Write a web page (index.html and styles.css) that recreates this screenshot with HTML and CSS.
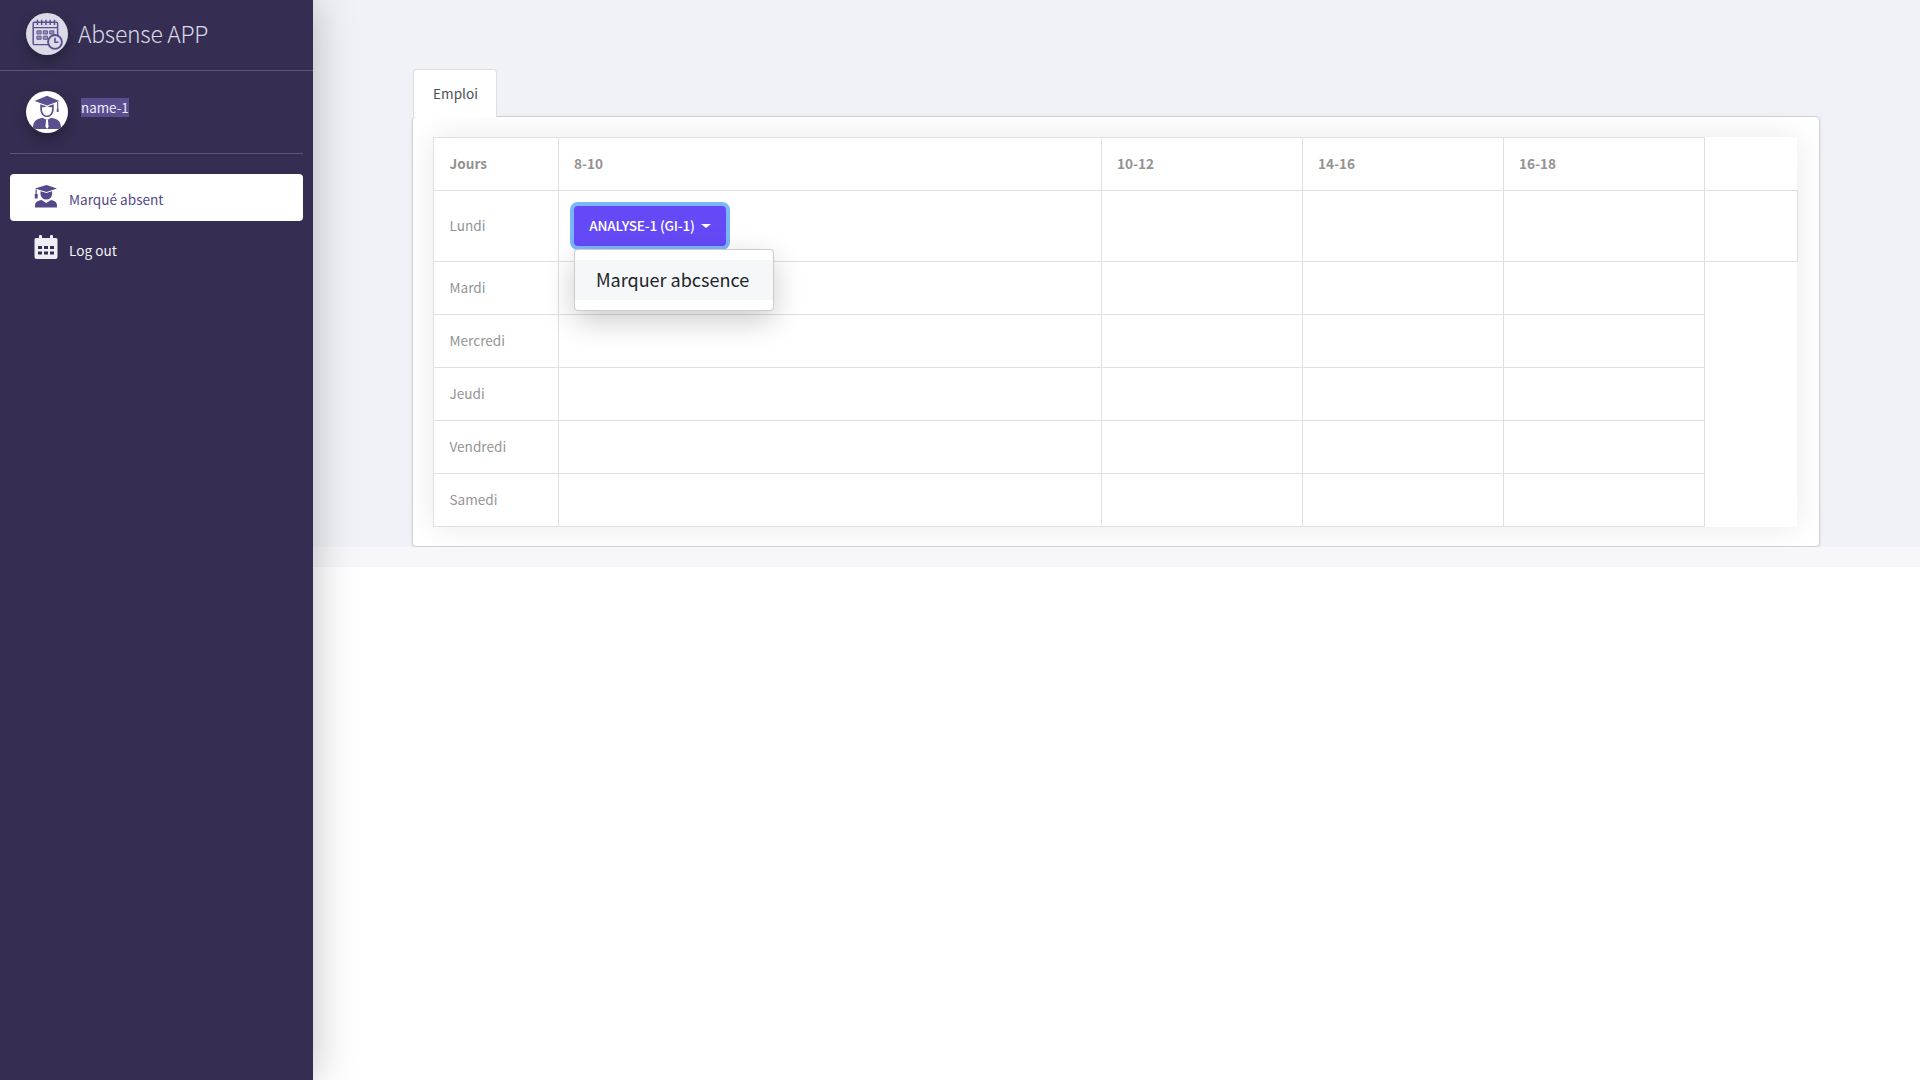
FILE: index.html
```html
<!DOCTYPE html>
<html lang="en">
<head>
    <meta charset="UTF-8">
    <meta name="viewport" content="width=device-width, initial-scale=1.0">
    <title>Absense APP</title>
    <link rel="stylesheet" href="styles.css">
</head>
<body>

<aside class="sidebar">
    <div class="brand">
        <span class="round-icon brand-icon">
            <svg viewBox="0 0 32 32" width="34" height="34" fill="none" stroke="#5b4f90" stroke-width="1.4">
                <rect x="3" y="5" width="23" height="21" rx="1"/>
                <path d="M3 10h23M7 2.5v5M11 2.5v5M15 2.5v5M19 2.5v5M23 2.5v5"/>
                <path d="M6.5 13h4v3h-4zM12.5 13h4v3h-4zM18.500 13h4v3h-4zM6.500 18h4v3h-4zM12.500 18h4v3h-4z" fill="#5b4f90" fill-opacity=".55" stroke-width=".8"/>
                <circle cx="23.500" cy="23.500" r="6.500" fill="#dcdae6" stroke-width="1.800"/>
                <path d="M23.500 19.500v4.300h3.300" stroke-width="1.500"/>
            </svg>
        </span>
        <span class="brand-name">Absense APP</span>
    </div>

    <div class="user">
        <span class="round-icon user-icon">
            <svg viewBox="0 0 32 32" width="36" height="36">
                <path d="M16 1.500 5 6.200 16 10.200 27 6.200z" fill="#5b4f90"/>
                <path d="M25.500 7v6" stroke="#5b4f90" stroke-width="1"/>
                <rect x="24.700" y="13" width="1.600" height="3" fill="#5b4f90"/>
                <path d="M10 9v4c0 4 2.500 7.500 6 7.500s6-3.500 6-7.500V9l-6 2.200z" fill="#5b4f90"/>
                <path d="M11.500 11.500c2 .5 3.500 0 4.500-.8 1 .8 2.500 1.300 4.500.8v1.500c0 3.500-2 6.200-4.500 6.200s-4.500-2.700-4.500-6.200z" fill="#fff"/>
                <path d="M3.500 31c0-6 1.500-8.500 8.500-10l4 2 4-2c7 1.500 8.500 4 8.500 10z" fill="#5b4f90"/>
                <path d="M15.200 23h1.600l.6 6-1.400 2-1.400-2z" fill="#fff"/>
            </svg>
        </span>
        <span class="user-name">name-1</span>
    </div>

    <nav class="menu">
        <a class="menu-item active" href="#">
            <svg viewBox="0 0 24 24" width="24" height="24" fill="#54488a">
                <path d="M12.500 1 1 4.500 12.500 8 23 4.500z"/>
                <path d="M1.500 5.500h1.200v4.500h1v4.500H.8V10h.7z"/>
                <path d="M6.500 7.200V10a5.800 5.500 0 0 0 11.600 0V7.200L12.500 9z"/>
                <path d="M7.500 16 12.300 19l4.700-3c4 .6 6 2.500 6 5.500v2H1v-2c0-3 2.500-4.900 6.500-5.500z"/>
            </svg>
            <span>Marqué absent</span>
        </a>
        <a class="menu-item" href="#">
            <svg viewBox="0 0 24 24" width="24" height="24" fill="#eeeef4">
                <rect x="5" y="0" width="3" height="5" rx="1"/>
                <rect x="16" y="0" width="3" height="5" rx="1"/>
                <path fill-rule="evenodd" d="M2 3h20a1.500 1.500 0 0 1 1.500 1.500V22a2 2 0 0 1-2 2H2.500a2 2 0 0 1-2-2V4.500A1.500 1.500 0 0 1 2 3zM4 11v3h4v-3zM10 11v3h4v-3zM16 11v3h4v-3zM4 16.500v3h4v-3zM10 16.500v3h4v-3zM16 16.500v3h4v-3z"/>
            </svg>
            <span>Log out</span>
        </a>
    </nav>
</aside>

<main class="main">
    <section class="panel">
        <div class="tab">Emploi</div>
        <div class="card">
            <div class="table-wrap">
                <table class="schedule">
                    <thead>
                        <tr>
                            <th class="col-day">Jours</th>
                            <th class="col-first">8-10</th>
                            <th class="col-slot">10-12</th>
                            <th class="col-slot">14-16</th>
                            <th class="col-slot">16-18</th>
                            <th class="col-extra blank"></th>
                        </tr>
                    </thead>
                    <tbody>
                        <tr class="row-tall">
                            <td>Lundi</td>
                            <td class="cell-course">
                                <div class="dropdown">
                                    <button class="btn-course" type="button">ANALYSE-1 (GI-1)<span class="caret"></span></button>
                                    <div class="dropdown-menu">
                                        <a class="dropdown-item" href="#">Marquer abcsence</a>
                                    </div>
                                </div>
                            </td>
                            <td></td><td></td><td></td><td class="col-extra"></td>
                        </tr>
                        <tr><td>Mardi</td><td></td><td></td><td></td><td></td></tr>
                        <tr><td>Mercredi</td><td></td><td></td><td></td><td></td></tr>
                        <tr><td>Jeudi</td><td></td><td></td><td></td><td></td></tr>
                        <tr><td>Vendredi</td><td></td><td></td><td></td><td></td></tr>
                        <tr><td>Samedi</td><td></td><td></td><td></td><td></td></tr>
                    </tbody>
                </table>
            </div>
        </div>
    </section>
    <div class="panel-foot"></div>
</main>

</body>
</html>
```

FILE: styles.css
```css
* {
    box-sizing: border-box;
}
body {
    font-family: "Noto Sans CJK SC", "Noto Sans", sans-serif;
    background-color: #fff;
    margin: 0;
    padding: 0;
    display: flex;
    min-height: 1080px;
    overflow: hidden;
}
a {
    text-decoration: none;
}

/* sidebar */
.sidebar {
    width: 313px;
    height: 1080px;
    flex-shrink: 0;
    background-color: #352e52;
    box-shadow: 0 0 40px rgba(0, 0, 0, 0.25);
    position: relative;
    z-index: 2;
}
.brand {
    height: 71px;
    padding: 13px 0 0 26px;
    display: flex;
    align-items: flex-start;
    gap: 10px;
    border-bottom: 1px solid rgba(255, 255, 255, 0.2);
}
.round-icon {
    width: 42px;
    height: 42px;
    border-radius: 50%;
    display: flex;
    align-items: center;
    justify-content: center;
    flex-shrink: 0;
    box-shadow: 0 6px 14px rgba(0, 0, 0, 0.3);
}
.brand-icon {
    background-color: #dcdae6;
}
.brand-name {
    font-size: 23px;
    font-weight: 300;
    line-height: 40px;
    color: #d9d9e6;
    letter-spacing: -0.3px;
}
.user {
    margin: 0 10px;
    height: 83px;
    padding: 20px 0 0 16px;
    display: flex;
    align-items: flex-start;
    gap: 13px;
    border-bottom: 1px solid rgba(255, 255, 255, 0.2);
}
.user-icon {
    background-color: #fff;
    overflow: hidden;
}
.user-name {
    margin-top: 7px;
    padding: 0;
    font-size: 13.4px;
    line-height: 19px;
    color: #eeeef4;
    background-color: #5a4e90;
}
.menu {
    padding: 20px 10px 0;
}
.menu-item {
    height: 47px;
    padding: 0 0 0 24px;
    margin-bottom: 4px;
    display: flex;
    align-items: center;
    gap: 11px;
    border-radius: 4px;
    font-size: 13.6px;
    color: #f2f2f6;
}
.menu-item span {
    margin-top: 3px;
}
.menu-item svg {
    margin-top: -3px;
}
.menu-item.active {
    background-color: #fff;
    color: #54488a;
}

/* main area */
.main {
    flex: 1;
}
.panel {
    background-color: #f1f2f7;
    padding: 69px 100px 0 99px;
    height: 547px;
}
.panel-foot {
    height: 20px;
    background-color: #f7f7fa;
}
.tab {
    width: 84px;
    height: 48px;
    margin-left: 1px;
    padding-left: 1px;
    background-color: #fff;
    border: 1px solid #dedee4;
    border-bottom: none;
    border-radius: 4px 4px 0 0;
    font-size: 13.6px;
    line-height: 46px;
    text-align: center;
    color: #495057;
    position: relative;
    z-index: 1;
    margin-bottom: -1px;
}
.card {
    background-color: #fff;
    border: 1px solid #d2d2da;
    border-radius: 4px;
    height: 431px;
    padding: 20px;
    box-shadow: 0 1px 3px rgba(0, 0, 0, 0.1);
}
.table-wrap {
    width: 1364px;
    background-color: #fff;
    box-shadow: 0 0 30px rgba(0, 0, 0, 0.09);
    height: 390px;
}
.schedule {
    border-collapse: collapse;
    table-layout: fixed;
    width: 1364px;
    font-size: 13.6px;
    color: #949494;
}
.schedule th, .schedule td {
    border: 1px solid #dfdfe4;
    padding: 0 15px 3px;
    height: 53px;
    text-align: left;
    vertical-align: middle;
}
.schedule th:first-child, .schedule td:first-child {
    padding-left: 15.5px;
}
.schedule th {
    font-weight: 700;
    color: #949292;
}
.schedule .blank {
    border-top-color: transparent;
    border-right-color: transparent;
}
.schedule .cell-course {
    padding-bottom: 1px;
}
.row-tall td {
    height: 71px;
}
.col-day { width: 125px; }
.col-first { width: 543px; }
.col-slot { width: 201px; }
.col-extra { width: 93px; }

/* dropdown */
.dropdown {
    position: relative;
    display: inline-block;
    vertical-align: middle;
}
.btn-course {
    display: block;
    width: 152px;
    height: 40px;
    margin: 0;
    border: none;
    border-radius: 4px;
    background-color: #6549f7;
    box-shadow: 0 0 0 4px #7ab6fb;
    color: #fff;
    font-family: inherit;
    font-size: 13.6px;
    font-weight: 500;
    line-height: 38px;
    padding: 0 0 2px;
    letter-spacing: -0.2px;
}
.caret {
    display: inline-block;
    margin-left: 6px;
    vertical-align: 3px;
    border-top: 4px solid #fff;
    border-left: 5px solid transparent;
    border-right: 5px solid transparent;
}
.dropdown-menu {
    position: absolute;
    top: 43px;
    left: 0;
    width: 200px;
    height: 62px;
    padding: 10px 0;
    background-color: #fff;
    border: 1px solid rgba(0, 0, 0, 0.2);
    border-radius: 4px;
    box-shadow: 0 10px 30px rgba(0, 0, 0, 0.2);
    z-index: 3;
}
.dropdown-item {
    display: block;
    height: 40px;
    padding-left: 21px;
    background-color: #f6f7f9;
    font-size: 18px;
    line-height: 38px;
    color: #212529;
    white-space: nowrap;
}
```
